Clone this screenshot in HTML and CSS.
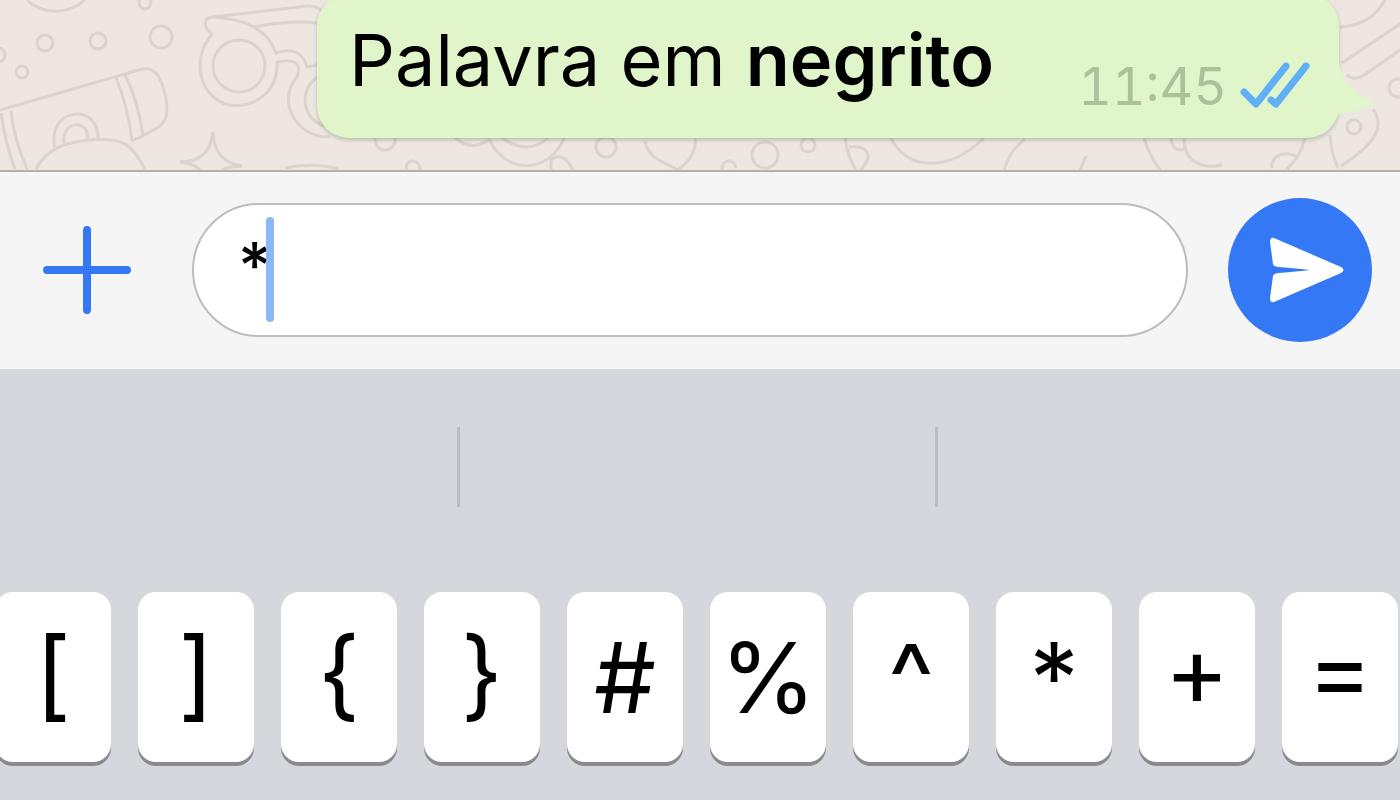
FILE: index.html
```html
<!DOCTYPE html>
<html lang="pt-BR">
<head>
    <meta charset="UTF-8">
    <meta name="viewport" content="width=device-width, initial-scale=1.0">
    <title>Palavra em negrito</title>
    <link rel="stylesheet" href="styles.css">
</head>
<body>
    <main class="chat">
        <svg class="wallpaper" viewBox="0 0 1400 170" preserveAspectRatio="xMinYMin slice" aria-hidden="true">
            <!-- dots -->
            <circle cx="-2" cy="55" r="7"/>
            <circle cx="22" cy="72" r="6"/>
            <circle cx="45" cy="43" r="8"/>
            <circle cx="98" cy="41" r="8"/>
            <circle cx="161" cy="37" r="11"/>
            <path d="M139 0C138 12 151 12 151 0"/>
            <path d="M27 0C42 15 68 15 85 0"/>
            <!-- torch -->
            <path d="M0 110L142 69C154 67 160 76 163 87C169 106 168 120 160 126Q149 133 132 141"/>
            <path d="M1 113Q5 143 15 169M11 111Q14 139 27 169M116 78Q128 106 132 141M125 75Q139 103 143 136"/>
            <path d="M55 149C45 108 99 101 98 139M64 143C61 119 91 120 87 139"/>
            <path d="M36 169C48 147 66 143 88 140C124 137 130 143 145 169"/>
            <!-- glasses -->
            <path d="M212 34C190 60 200 98 229 105C258 109 279 88 277 62C298 58 301 65 297 77C276 101 296 138 330 137"/>
            <path d="M212 34C201 26 205 17 213 17C244 19 267 28 276 53C293 47 303 53 307 67L330 62M213 17L307 6Q319 5 324 14M254 27Q291 20 317 23"/>
            <circle cx="239" cy="66" r="26"/>
            <circle cx="332" cy="100" r="27"/>
            <!-- star and moon edge -->
            <path d="M180 162Q210 162 213 132Q214 162 242 166Q226 167 222 170M180 162Q195 164 200 170"/>
            <path d="M285 168Q313 162 338 169"/>
            <!-- strip under the bubble -->
            <circle cx="385" cy="140" r="10"/>
            <path d="M407 170C403 158 421 158 420 170M455 138Q473 152 488 140M488 136C502 174 549 177 565 136M502 138Q528 156 548 138M551 170L551 160Q563 150 573 170"/>
            <circle cx="606" cy="147" r="10"/>
            <path d="M645 141C648 160 667 162 677 170Q698 157 695 135M722 170C722 158 734 158 736 168"/>
            <circle cx="765" cy="155" r="13"/>
            <circle cx="808" cy="145" r="7"/>
            <path d="M845 136Q847 157 856 170M849 147Q869 145 868 159L861 170M890 136C906 172 949 172 984 138M1004 170Q1010 150 1025 139M1080 170L1086 156M1144 138Q1149 155 1160 170M1171 138Q1173 153 1184 149M1184 138C1184 163 1203 169 1222 165M1305 138Q1300 158 1286 170M1272 168C1270 155 1287 150 1297 157"/>
            <!-- right edge -->
            <path d="M1340 27Q1372 25 1385 0M1342 63L1400 24M1347 75Q1353 81 1363 76L1400 50M1330 135Q1331 153 1338 168M1373 109C1386 127 1374 145 1341 166"/>
            <circle cx="1354" cy="127" r="7"/>
            <circle cx="1398" cy="88" r="9"/>
        </svg>

        <div class="bubble">
            <p class="message">Palavra em <strong>negrito</strong></p>
            <div class="meta">
                <time datetime="11:45">11:45</time>
                <svg class="ticks" viewBox="0 0 70 48" role="img" aria-label="Lida">
                    <path d="M5 29L17 41L47 3M32 37L37 41L67 3"/>
                </svg>
            </div>
            <svg class="tail" viewBox="0 0 40 56" aria-hidden="true">
                <path d="M0 0H3C6 20 18 33 38 39Q40 41 36 42Q20 51 3 52L0 56Z"/>
            </svg>
        </div>
    </main>

    <form class="composer">
        <button class="attach" type="button" aria-label="Anexar">
            <svg viewBox="0 0 88 88"><path d="M44 4V84M4 44H84"/></svg>
        </button>
        <div class="field">
            <input class="field-input" type="text" value="*" aria-label="Mensagem" autocomplete="off">
            <span class="caret"></span>
        </div>
        <button class="send" type="button" aria-label="Enviar">
            <svg viewBox="0 0 144 144">
                <path d="M46 40L113 69Q118 72 113 75L46 104Q42 105 42 100L45 78Q45 76 50 75Q64 74 82 72Q64 70 50 69Q45 68 45 66L42 44Q42 39 46 40Z"/>
            </svg>
        </button>
    </form>

    <section class="keyboard">
        <div class="suggestions">
            <span></span>
            <span></span>
            <span></span>
        </div>
        <div class="keys">
            <button class="key" type="button">[</button>
            <button class="key" type="button">]</button>
            <button class="key" type="button">{</button>
            <button class="key" type="button">}</button>
            <button class="key" type="button">#</button>
            <button class="key" type="button">%</button>
            <button class="key" type="button">^</button>
            <button class="key key-raised" type="button">*</button>
            <button class="key" type="button">+</button>
            <button class="key" type="button">=</button>
        </div>
    </section>
</body>
</html>
```
FILE: styles.css
```css
* {
    box-sizing: border-box;
}
body {
    margin: 0;
    min-height: 100vh;
    display: flex;
    flex-direction: column;
    overflow-x: hidden;
    font-family: Inter, "Liberation Sans", sans-serif;
    background-color: #d5d7dc;
}
button {
    padding: 0;
    border: none;
    background: none;
    cursor: pointer;
}
svg {
    display: block;
}

/* Conversation */
.chat {
    position: relative;
    overflow: hidden;
    padding: 0 61px 32px 317px;
    border-bottom: 2px solid #b3afac;
    background-color: #eee6e0;
}
.wallpaper {
    position: absolute;
    top: 0;
    left: 0;
    width: 100%;
    height: 100%;
    fill: none;
    stroke: #dbd3cd;
    stroke-width: 3;
}
.bubble {
    position: relative;
    display: flex;
    justify-content: space-between;
    align-items: flex-end;
    margin-top: -6px;
    padding: 18px 30px 24px 32px;
    border-radius: 32px;
    background-color: #e0f6ca;
    box-shadow: 0 2px 4px rgba(0, 0, 0, 0.2);
}
.message {
    margin: 0;
    padding-bottom: 6px;
    font-size: 72px;
    line-height: 96px;
    color: #000;
}
.message strong {
    font-weight: 600;
}
.meta {
    display: flex;
    align-items: center;
    gap: 12px;
    font-size: 52px;
    font-variant-numeric: tabular-nums;
    line-height: 54px;
    color: #adc09c;
}
.ticks {
    width: 70px;
    height: 48px;
    overflow: visible;
    fill: none;
    stroke: #5fb0f6;
    stroke-width: 7;
    stroke-linecap: round;
    stroke-linejoin: round;
}
.tail {
    position: absolute;
    right: -37px;
    bottom: 20px;
    width: 40px;
    height: 56px;
    fill: #e0f6ca;
}

/* Message box */
.composer {
    display: flex;
    align-items: center;
    gap: 40px;
    height: 197px;
    padding: 0 28px 1px 43px;
    background-color: #f5f5f5;
}
.attach {
    width: 88px;
    height: 88px;
    margin-right: 21px;
}
.attach svg {
    fill: none;
    stroke: #3478f6;
    stroke-width: 8;
    stroke-linecap: round;
}
.field {
    position: relative;
    flex: 1;
}
.field-input {
    display: block;
    width: 100%;
    height: 134px;
    padding: 0 44px 10px;
    border: 2px solid #bdbdbd;
    border-radius: 67px;
    outline: none;
    background-color: #fff;
    font-family: Inter, sans-serif;
    font-size: 64px;
    font-weight: 500;
    color: #000;
}
.caret {
    position: absolute;
    top: 14px;
    left: 74px;
    width: 8px;
    height: 105px;
    border-radius: 4px;
    background-color: #8ab7f5;
}
.send {
    width: 144px;
    height: 144px;
    border-radius: 50%;
    background-color: #3478f6;
}
.send svg {
    fill: #fff;
}

/* Keyboard */
.keyboard {
    flex: 1;
    padding-bottom: 38px;
}
.suggestions {
    display: flex;
    margin: 0 -16px 0 -18px;
    padding: 58px 0 85px;
}
.suggestions span {
    flex: 1;
    height: 80px;
    border-right: 3px solid #bbbdc2;
}
.suggestions span:last-child {
    border-color: transparent;
}
.keys {
    display: flex;
    gap: 27px;
    margin: 0 2px 0 -5px;
}
.key {
    flex: 1;
    height: 170px;
    border-radius: 18px;
    background-color: #fff;
    box-shadow: 0 4px 0 #898a8e;
    font-family: Inter, sans-serif;
    font-size: 98px;
    font-feature-settings: "case";
    color: #000;
}
.key-raised {
    font-feature-settings: normal;
}
```
